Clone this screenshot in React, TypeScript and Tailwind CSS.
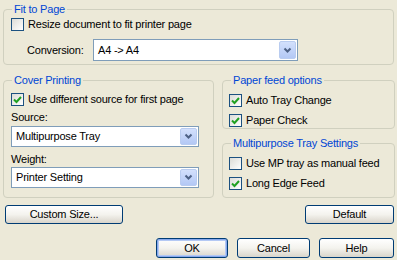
import React from "react";

// XP style "Paper" printer tab

function CheckBox({ checked, label }: { checked: boolean; label: string }) {
  return (
    <div className="flex items-center gap-[4px] leading-[13px]">
      <span className="w-[13px] h-[13px] border border-[#1C5180] bg-gradient-to-br from-[#DCDCD7] to-white flex items-center justify-center">
        {checked && (
          <svg width="11" height="11" viewBox="0 0 11 11">
            <path d="M2 5.5 L4.5 8 L9 3" fill="none" stroke="#21A121" strokeWidth="2" />
          </svg>
        )}
      </span>
      <span>{label}</span>
    </div>
  );
}

function Select({ value, width, height }: { value: string; width: string; height: string }) {
  return (
    <div className={`flex items-center justify-between bg-white border border-[#7F9DB9] ${width} ${height}`}>
      <span className="pl-[4px]">{value}</span>
      <span className="mr-[1px] w-[17px] h-[calc(100%-2px)] rounded-[2px] border border-[#B9CCF0] bg-gradient-to-b from-[#D3E0FC] to-[#B3C8F5] flex items-center justify-center">
        <svg width="9" height="7" viewBox="0 0 9 7">
          <path d="M1.5 1.5 L4.5 4.5 L7.5 1.5" fill="none" stroke="#4D6185" strokeWidth="2" />
        </svg>
      </span>
    </div>
  );
}

function Button({ label, width, isDefault }: { label: string; width: string; isDefault?: boolean }) {
  return (
    <div
      className={`${width} flex items-center justify-center rounded-[3px] border border-[#003C74] bg-gradient-to-b from-white via-[#F4F3EE] to-[#D9D5CB] ${
        isDefault ? "shadow-[inset_0_0_0_1px_#87A8EC,inset_0_0_0_2px_#B4C9F4]" : ""
      }`}
    >
      {label}
    </div>
  );
}

function Group({ title, className, children }: { title: string; className: string; children: React.ReactNode }) {
  return (
    <div className={`relative border border-[#D0D0BF] rounded-[4px] ${className}`}>
      <span className="absolute -top-[7px] left-[8px] px-[2px] bg-[#ECE9D8] text-[#0046D5] leading-[13px]">
        {title}
      </span>
      {children}
    </div>
  );
}

export default function App() {
  return (
    <div className="w-[397px] h-[260px] overflow-hidden bg-[#ECE9D8] text-black text-[11px] tracking-[-0.2px] font-['Liberation_Sans',Arial,sans-serif] flex flex-col">
      <Group title="Fit to Page" className="ml-[3px] mt-[9px] w-[391px] h-[56px] pt-[8px] pl-[7px]">
        <CheckBox checked={false} label="Resize document to fit printer page" />
        <div className="flex items-center mt-[8px]">
          <span className="ml-[16px] w-[66px]">Conversion:</span>
          <Select value="A4 -> A4" width="w-[205px]" height="h-[22px]" />
        </div>
      </Group>

      <div className="flex mt-[15px] ml-[3px] gap-[8px]">
        <Group title="Cover Printing" className="w-[211px] h-[118px] pt-[12px] pl-[7px]">
          <CheckBox checked label="Use different source for first page" />
          <div className="mt-[5px] leading-[12px]">Source:</div>
          <div className="mt-[3px]">
            <Select value="Multipurpose Tray" width="w-[188px]" height="h-[21px]" />
          </div>
          <div className="mt-[6px] leading-[12px]">Weight:</div>
          <div className="mt-[2px]">
            <Select value="Printer Setting" width="w-[188px]" height="h-[21px]" />
          </div>
        </Group>

        <div className="flex flex-col w-[173px]">
          <Group title="Paper feed options" className="h-[49px] pt-[13px] pl-[6px] flex flex-col gap-[7px]">
            <CheckBox checked label="Auto Tray Change" />
            <CheckBox checked label="Paper Check" />
          </Group>
          <Group title="Multipurpose Tray Settings" className="mt-[14px] h-[55px] pt-[13px] pl-[6px] flex flex-col gap-[7px]">
            <CheckBox checked={false} label="Use MP tray as manual feed" />
            <CheckBox checked label="Long Edge Feed" />
          </Group>
        </div>
      </div>

      <div className="flex justify-between mt-[7px] pl-[5px] pr-[3px] h-[19px]">
        <Button label="Custom Size..." width="w-[118px]" />
        <Button label="Default" width="w-[89px]" />
      </div>

      <div className="flex justify-end gap-[9px] mt-[14px] pr-[3px] h-[20px]">
        <Button label="OK" width="w-[72px]" isDefault />
        <Button label="Cancel" width="w-[73px]" />
        <Button label="Help" width="w-[75px]" />
      </div>
    </div>
  );
}
